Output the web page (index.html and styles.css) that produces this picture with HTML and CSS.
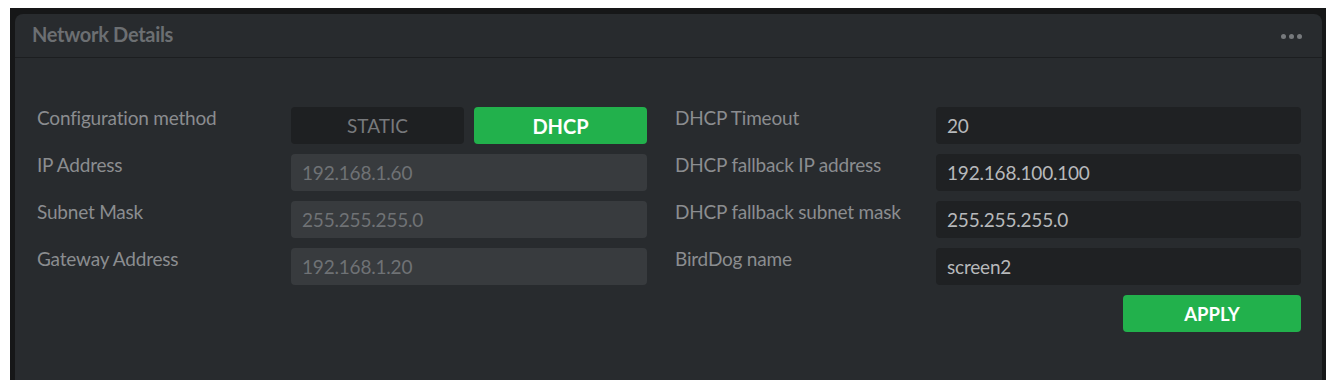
FILE: index.html
```html
<html>
    <head>
        <title>Network Details</title>
        <link rel="stylesheet" href="styles.css">
    </head>
    <body>
        <div class="frame">
            <div class="panel">
                <div class="panel-head">
                    <span class="panel-title">Network Details</span>
                    <span class="dots"><i></i><i></i><i></i></span>
                </div>
                <div class="panel-body">
                    <div class="lbl">Configuration method</div>
                    <div class="switch">
                        <button class="sw">STATIC</button>
                        <button class="sw on">DHCP</button>
                    </div>
                    <div class="lbl right">DHCP Timeout</div>
                    <div class="fld">20</div>

                    <div class="lbl">IP Address</div>
                    <div class="fld off">192.168.1.60</div>
                    <div class="lbl right">DHCP fallback IP address</div>
                    <div class="fld">192.168.100.100</div>

                    <div class="lbl">Subnet Mask</div>
                    <div class="fld off">255.255.255.0</div>
                    <div class="lbl right">DHCP fallback subnet mask</div>
                    <div class="fld">255.255.255.0</div>

                    <div class="lbl">Gateway Address</div>
                    <div class="fld off">192.168.1.20</div>
                    <div class="lbl right">BirdDog name</div>
                    <div class="fld">screen2</div>

                    <button class="apply">APPLY</button>
                </div>
            </div>
        </div>
    </body>
</html>
```
FILE: styles.css
```css
body {
        margin: 0;
        background: #fff;
        font-family: Lato, "Open Sans", sans-serif;}

.frame {
        margin: 8px 6px 0 10px;
        height: 372px;
        background: #161718;
        padding: 6px 4px 0 5px;
        box-sizing: border-box;}

.panel {
        background: #282b2e;
        height: 366px;
        border-radius: 8px 8px 0 0;}

.panel-head {
        height: 43px;
        border-bottom: 1px solid #1c1e20;
        display: flex;
        align-items: center;
        justify-content: space-between;
        padding: 0 20px 0 17px;}

.panel-title {
        color: #6c6f72;
        font-weight: bold;
        font-size: 20px;
        letter-spacing: -0.3px;
        margin-top: -4px;}

.dots {
        display: flex;
        gap: 3px;
        margin-top: 2px;}

.dots i {
        width: 5px;
        height: 5px;
        border-radius: 50%;
        background: #777a7d;}

.panel-body {
        display: grid;
        grid-template-columns: 254px 356px 289px 365px;
        grid-auto-rows: 37px;
        row-gap: 10px;
        padding: 49px 0 0 22px;}

.lbl {
        color: #8b8d90;
        font-size: 19px;
        letter-spacing: -0.2px;
        margin-top: -1px;}

.lbl.right { padding-left: 28px; }

.switch {
        display: flex;
        gap: 10px;}

.sw {
        flex: 1;
        border: 0;
        border-radius: 4px;
        background: #1e2022;
        color: #77797c;
        font-family: Lato, sans-serif;
        font-size: 19px;}

.sw.on {
        background: #22b14c;
        color: #fff;
        font-weight: bold;
        font-size: 20px;}

.fld {
        background: #1f2123;
        border-radius: 4px;
        color: #b7b9bb;
        font-size: 19px;
        letter-spacing: -0.2px;
        display: flex;
        align-items: center;
        padding: 0 11px;}

.fld.off {
        background: #383b3e;
        color: #6f7275;}

.apply {
        grid-column: 4;
        justify-self: end;
        width: 178px;
        border: 0;
        border-radius: 4px;
        background: #22b14c;
        color: #fff;
        font-family: Lato, sans-serif;
        font-weight: bold;
        font-size: 18.5px;}
```
